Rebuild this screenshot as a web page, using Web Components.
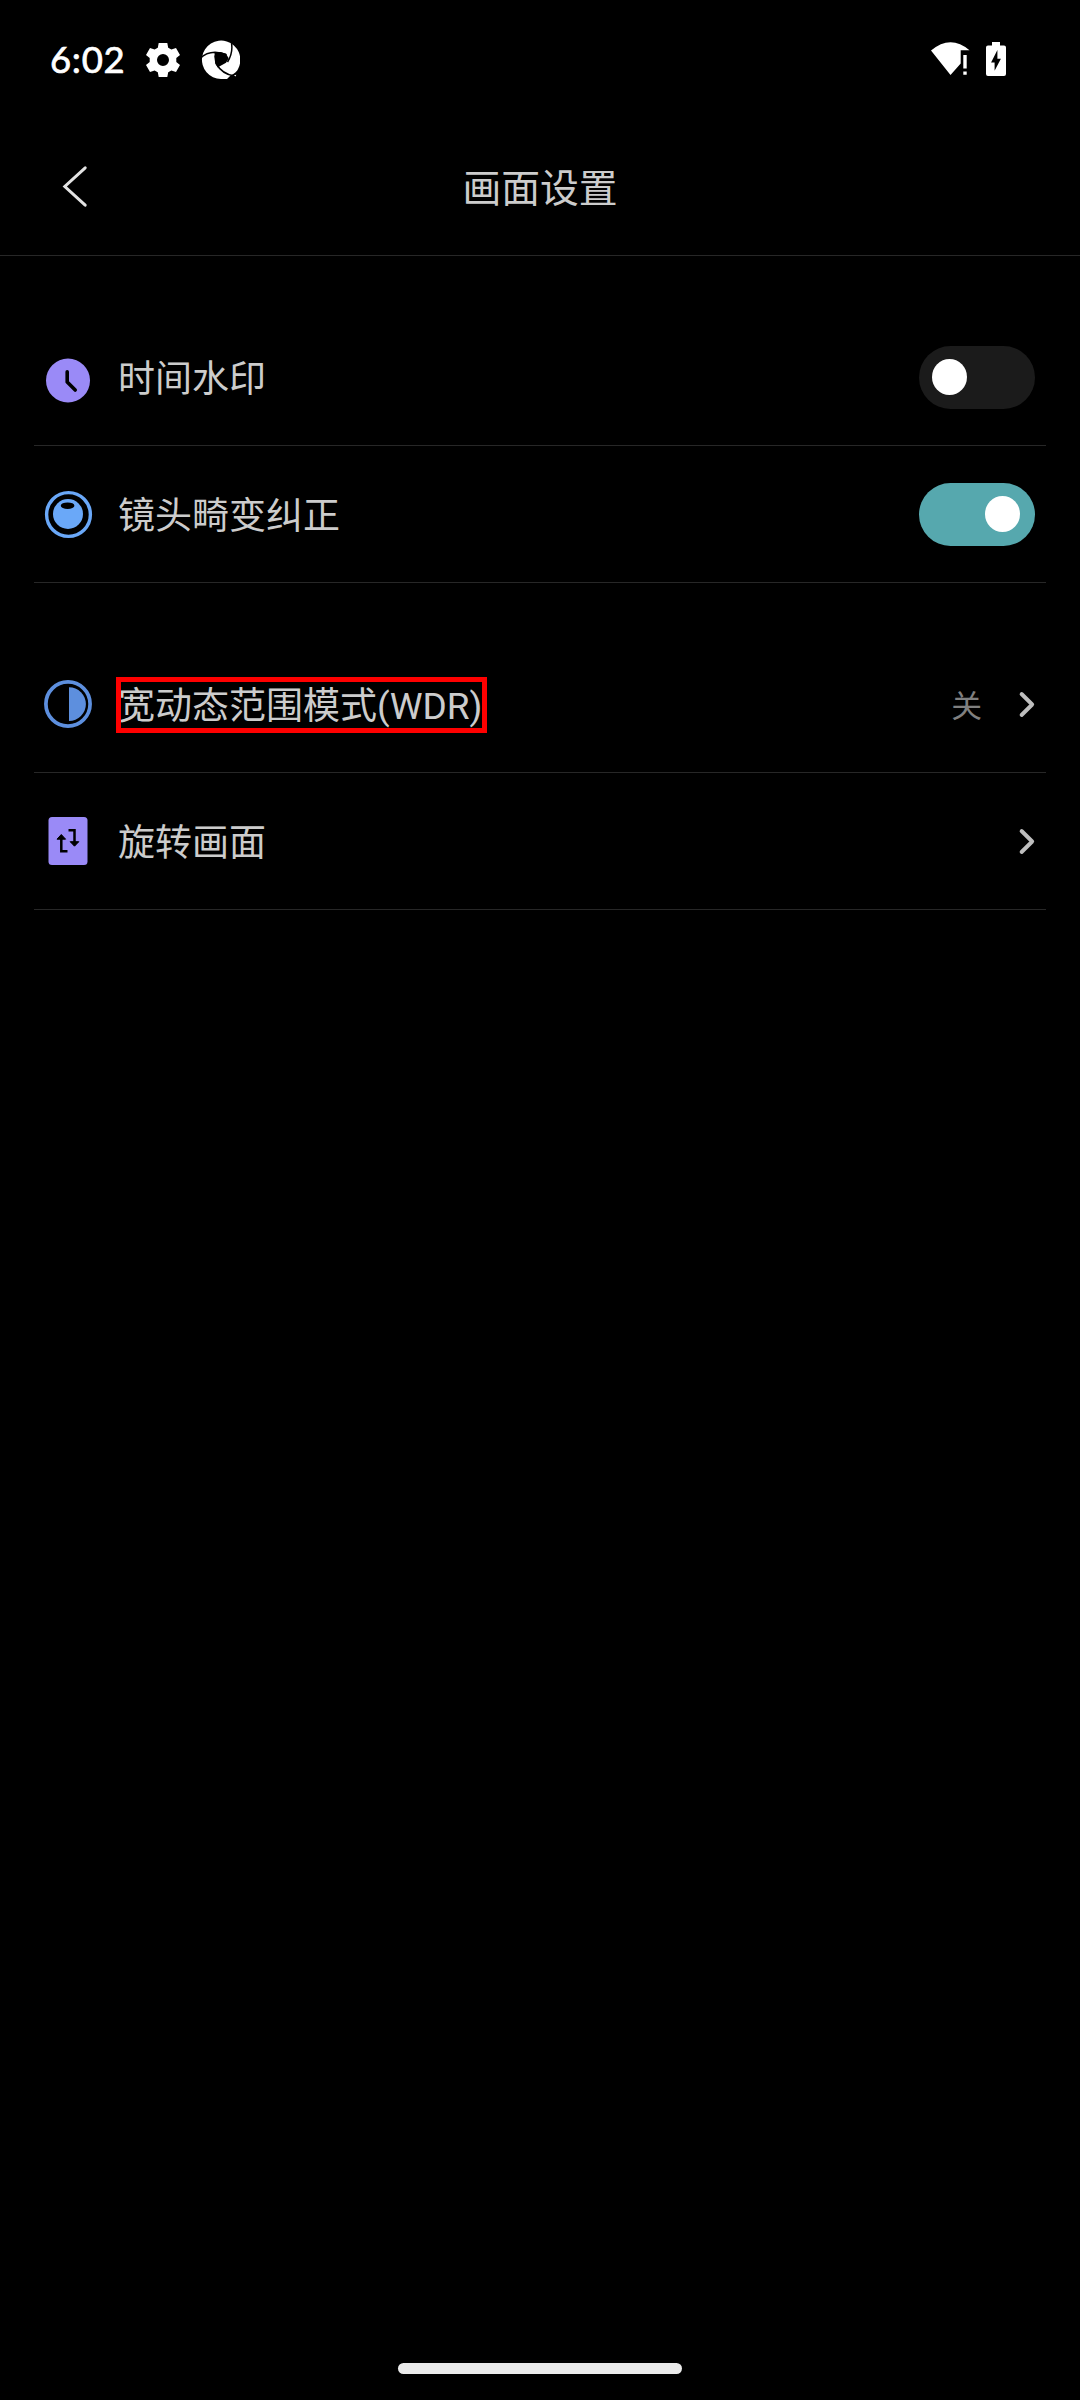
<!DOCTYPE html>
<html lang="zh-CN">
<head>
<meta charset="utf-8">
<title>画面设置</title>
<style>
html, body { margin: 0; background: #000; }
</style>
</head>
<body>
<settings-screen></settings-screen>
<script>
const define = (name, html) => {
  const t = document.createElement('template');
  t.innerHTML = html;
  customElements.define(name, class extends HTMLElement {
    constructor() {
      super();
      this.attachShadow({ mode: 'open' }).appendChild(t.content.cloneNode(true));
    }
  });
};

define('status-bar', `
<style>
:host { display: flex; box-sizing: border-box; height: 120px; padding: 40px 74px 40px 50px; justify-content: space-between; color: #fff; }
.side { display: flex; height: 40px; }
.time { width: 75px; font: 400 36.5px/38px Lato, sans-serif; letter-spacing: .7px; -webkit-text-stroke: .7px #fff; white-space: nowrap; }
.gear { margin-left: 20px; }
.swirl { margin-left: 19px; }
.battery { margin-left: 14px; }
svg { display: block; }
</style>
<div class="side">
  <span class="time">6:02</span>
  <svg class="gear" width="36" height="40" viewBox="145 40 36 40"><path fill="#fff" fill-rule="evenodd" d="M158.7 43h8.6l.9 4.7 3.2 1.9 4.6-1.7 4 7-3.7 3.1v4l3.7 3.1-4 7-4.6-1.7-3.2 1.9-.9 4.7h-8.6l-.9-4.7-3.2-1.9-4.6 1.7-4-7 3.7-3.1v-4l-3.700-3.1 4-7 4.6 1.7 3.2-1.9zM163 54a6 6 0 1 0 0 12 6 6 0 0 0 0-12z"/></svg>
  <svg class="swirl" width="40" height="40" viewBox="201 40 40 40">
    <path fill="#fff" d="M228 79h-6A19.2 19.2 0 1 1 239.5 68c-1 3-4 6-8 7.500z"/>
    <path d="M215.500 53l6-1 5.500 1.700 2.700 4.600-2.600 4.500-8.600 4.600-2.500-5.400z"/>
    <path fill="none" stroke="#000" stroke-width="1.500" d="M201 58.500q6-6 15-6.200 6 0 11.500 2.500M232.500 43q1.700 10-4 19M235.500 76q-12-1.500-18.500-12.500-.5-5-1-8"/>
    <path fill="#fff" d="M235 75.300l2.300-.5-.8 1.800z"/>
  </svg>
</div>
<div class="side">
  <svg width="42" height="40" viewBox="930 40 42 40"><path fill="#fff" d="M931 50.500Q950.500 34 969.500 50.200h-8.800V63.500L950.500 75zM963.300 55h3.400v13.500h-3.400zM963.300 71.500h3.400v3.200h-3.400z"/></svg>
  <svg class="battery" width="20" height="40" viewBox="986 40 20 40"><path fill="#fff" d="M992 42h8v3.500h4q2 0 2 2V74q0 2-2 2h-16q-2 0-2-2V47.500q0-2 2-2h4z"/><path d="M997.400 50v8.800h3.500l-6.300 12v-8.400h-3.500z"/></svg>
</div>`);

define('title-bar', `
<style>
:host { display: grid; grid-template-columns: 120px 1fr 120px; align-items: center; box-sizing: border-box; height: 136px; border-bottom: 1px solid #272727; }
svg { display: block; margin-left: 60px; margin-bottom: 3px; }
.title { text-align: center; font-size: 38.800px; line-height: 56px; padding-top: 2px; color: #ccc; }
</style>
<svg width="30" height="44" viewBox="60 164 30 44"><path d="M85.200 167.800L64.800 186.500L85.200 205.200" fill="none" stroke="#e3e3e3" stroke-width="3" stroke-linecap="round"/></svg>
<div class="title"><slot></slot></div>`);

define('setting-row', `
<style>
:host { display: flex; align-items: center; box-sizing: border-box; height: 137px; margin: 0 34px; padding: 0 11px 0 8px; border-bottom: 1px solid #272727; }
.label { margin-left: 24px; padding-top: 6px; font-size: 37px; line-height: 54px; color: #ccc; white-space: nowrap; }
:host([marked]) .label { outline: 5px solid #f00; outline-offset: 0; margin: 2px 0 0 27px; padding: 3px 0 0; height: 43px; line-height: 44px; width: 361px; text-indent: -3px; }
.end { margin-left: auto; display: flex; align-items: center; }
</style>
<slot name="icon"></slot><div class="label"><slot></slot></div><div class="end"><slot name="end"></slot></div>`);

define('toggle-switch', `
<style>
:host { display: flex; align-items: center; box-sizing: border-box; width: 116px; height: 63px; padding: 0 13px; border-radius: 32px; background: #1b1b1b; }
:host([on]) { background: #56a8ae; justify-content: flex-end; padding-right: 15px; }
i { display: block; width: 35px; height: 36px; border-radius: 50%; background: #fff; }
</style><i></i>`);

define('row-value', `
<style>
:host { display: flex; align-items: center; gap: 36px; font-size: 30.800px; line-height: 44px; color: #808080; }
span { padding-top: 5px; }
svg { display: block; }
</style>
<span><slot></slot></span><svg width="17" height="28" viewBox="0 0 17 28"><path d="M3.600 4L14.200 14.500L3.600 25" fill="none" stroke="#bebebe" stroke-width="3.900" stroke-linecap="round" stroke-linejoin="round"/></svg>`);

const icons = {
  clock: '<circle cx="26" cy="29.500" r="22" fill="#9a8af7"/><path d="M25.200 20.800v10.300l8 8" fill="none" stroke="#000" stroke-width="3.600" stroke-linecap="round" stroke-linejoin="round"/>',
  lens: '<circle cx="26.500" cy="26.500" r="21.900" fill="none" stroke="#6aa8f8" stroke-width="3.400"/><circle cx="26" cy="26" r="15" fill="#6aa8f8"/><ellipse cx="25.600" cy="17.700" rx="6.800" ry="3.300"/>',
  wdr: '<circle cx="26" cy="26" r="22.100" fill="none" stroke="#5d8fde" stroke-width="3.700"/><path d="M27 9.200a16.900 16.900 0 0 1 0 33.800z" fill="#5d8fde"/>',
  rotate: '<rect x="6.500" y="2" width="39" height="48" rx="3.500" fill="#9a8af7"/><path d="M25.500 36.200H19.300V23M26.500 15.300h6V28" fill="none" stroke="#000" stroke-width="2.500"/><path d="M15 24.200l4.300-4.700 4.300 4.700zM28.200 26.700l4.300 4.500 4.300-4.500z" stroke="#000" stroke-linejoin="round"/>'
};
customElements.define('row-icon', class extends HTMLElement {
  connectedCallback() {
    this.attachShadow({ mode: 'open' }).innerHTML =
      '<style>:host{display:block;width:52px;height:52px}svg{display:block}</style><svg width="52" height="52" viewBox="0 0 52 52">' + icons[this.getAttribute('name')] + '</svg>';
  }
});

define('home-indicator', `
<style>
:host { display: flex; justify-content: center; margin-top: auto; padding-bottom: 26px; }
i { display: block; width: 284px; height: 11px; border-radius: 6px; background: #ebebeb; }
</style><i></i>`);

define('settings-screen', `
<style>
:host { display: flex; flex-direction: column; width: 1080px; height: 2400px; background: #000; font-family: Roboto, "Noto Sans CJK SC", sans-serif; }
section { margin-top: 53px; }
</style>
<status-bar></status-bar>
<title-bar>画面设置</title-bar>
<section>
  <setting-row><row-icon slot="icon" name="clock"></row-icon>时间水印<toggle-switch slot="end"></toggle-switch></setting-row>
  <setting-row><row-icon slot="icon" name="lens"></row-icon>镜头畸变纠正<toggle-switch slot="end" on></toggle-switch></setting-row>
</section>
<section>
  <setting-row marked><row-icon slot="icon" name="wdr"></row-icon>宽动态范围模式(WDR)<row-value slot="end">关</row-value></setting-row>
  <setting-row><row-icon slot="icon" name="rotate"></row-icon>旋转画面<row-value slot="end"></row-value></setting-row>
</section>
<home-indicator></home-indicator>`);
</script>
</body>
</html>
